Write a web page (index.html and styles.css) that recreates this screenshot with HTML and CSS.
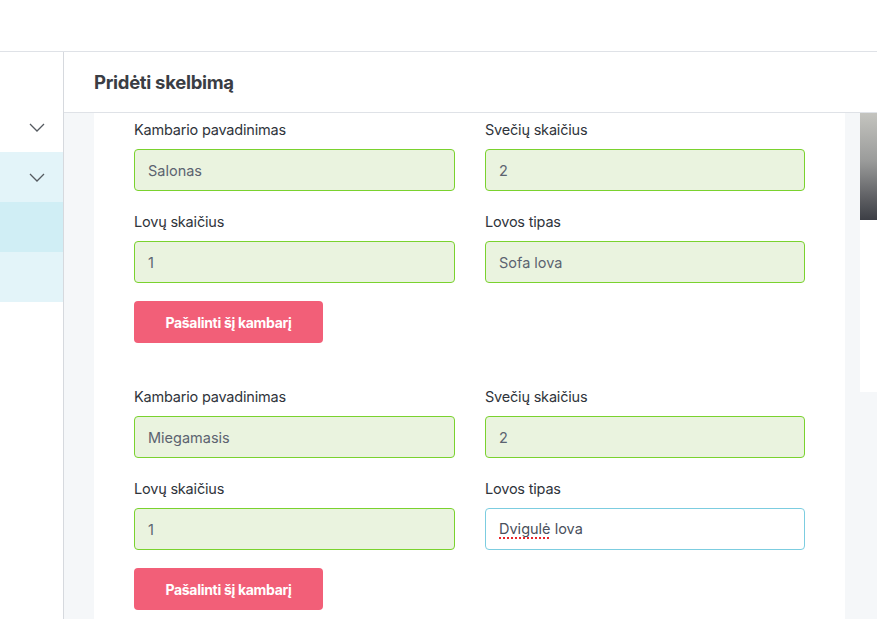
FILE: index.html
```html
<!DOCTYPE html>
<html lang="lt">

<head>
    <meta charset="UTF-8">
    <meta name="viewport" content="width=device-width, initial-scale=1.0">
    <title>Pridėti skelbimą</title>
    <link rel="stylesheet" href="styles.css">
</head>

<body>
    <div class="topbar"></div>

    <div class="layout">
        <aside class="sidebar">
            <div class="side-item"></div>
            <div class="side-item">
                <svg class="chevron" viewBox="0 0 16 9" width="16" height="9"><path d="M1 1l7 7 7-7" /></svg>
            </div>
            <div class="side-item open">
                <svg class="chevron" viewBox="0 0 16 9" width="16" height="9"><path d="M1 1l7 7 7-7" /></svg>
            </div>
            <div class="side-item active"></div>
            <div class="side-item open"></div>
        </aside>

        <main class="main">
            <div class="page-header">
                <h2>Pridėti skelbimą</h2>
            </div>

            <div class="page-body">
                <div class="panel">
                    <div class="room">
                        <div class="field-group">
                            <label>Kambario pavadinimas</label>
                            <input class="field valid" type="text" value="Salonas">
                        </div>
                        <div class="field-group">
                            <label>Svečių skaičius</label>
                            <input class="field valid" type="text" value="2">
                        </div>
                        <div class="field-group">
                            <label>Lovų skaičius</label>
                            <input class="field valid" type="text" value="1">
                        </div>
                        <div class="field-group">
                            <label>Lovos tipas</label>
                            <input class="field valid" type="text" value="Sofa lova">
                        </div>
                        <button class="btn-remove">Pašalinti šį kambarį</button>
                    </div>

                    <div class="room">
                        <div class="field-group">
                            <label>Kambario pavadinimas</label>
                            <input class="field valid" type="text" value="Miegamasis">
                        </div>
                        <div class="field-group">
                            <label>Svečių skaičius</label>
                            <input class="field valid" type="text" value="2">
                        </div>
                        <div class="field-group">
                            <label>Lovų skaičius</label>
                            <input class="field valid" type="text" value="1">
                        </div>
                        <div class="field-group">
                            <label>Lovos tipas</label>
                            <div class="field focused"><span class="misspelled">Dvigulė</span> lova</div>
                        </div>
                        <button class="btn-remove">Pašalinti šį kambarį</button>
                    </div>
                </div>

                <div class="preview">
                    <div class="preview-image"></div>
                </div>
            </div>
        </main>
    </div>
</body>

</html>
```

FILE: styles.css
```css
body {
    font-family: Inter, "Open Sans", Arial, sans-serif;
    margin: 0;
    padding: 0;
    background-color: #fff;
    color: #343a40;
    height: 619px;
    overflow: hidden;
}

.topbar {
    height: 51px;
    border-bottom: 1px solid #dfe2e7;
}

.layout {
    display: flex;
    height: 567px;
}

/* left navigation */
.sidebar {
    width: 63px;
    flex-shrink: 0;
    border-right: 1px solid #d6d9de;
}

.side-item {
    height: 50px;
    display: flex;
    align-items: center;
    justify-content: flex-end;
    padding-right: 18px;
}

.side-item.open {
    background-color: #e3f4f9;
}

.side-item.active {
    background-color: #d0eef5;
}

.chevron {
    fill: none;
    stroke: #555a60;
    stroke-width: 1.3;
}

.main {
    flex: 1;
    display: flex;
    flex-direction: column;
    min-width: 0;
}

.page-header {
    height: 60px;
    border-bottom: 1px solid #dfe2e7;
    display: flex;
    align-items: center;
    padding-left: 30px;
}

.page-header h2 {
    margin: 0;
    font-size: 18.5px;
    font-weight: 700;
    letter-spacing: -0.3px;
    color: #3a3d44;
}

.page-body {
    flex: 1;
    display: flex;
    gap: 15px;
    padding-left: 30px;
    background-color: #f5f7f9;
    overflow: hidden;
}

.panel {
    width: 671px;
    flex-shrink: 0;
    background-color: #fff;
    padding: 7px 40px 0;
}

.room {
    display: grid;
    grid-template-columns: 321px 320px;
    column-gap: 30px;
    row-gap: 21px;
    margin-bottom: 44px;
}

.field-group label {
    display: block;
    font-size: 14.5px;
    font-weight: 400;
    line-height: 20px;
    letter-spacing: -0.2px;
    margin-bottom: 9px;
    color: #2f343b;
}

.field {
    box-sizing: border-box;
    display: block;
    width: 100%;
    height: 42px;
    padding: 0 13px;
    font-family: inherit;
    font-size: 14.5px;
    color: #5c6370;
    border-radius: 4px;
    border: 1px solid #ced4da;
    background-color: #fff;
    outline: none;
}

.field.valid {
    background-color: #eaf3df;
    border-color: #7ad22e;
}

.field.focused {
    border-color: #7ccde0;
    line-height: 40px;
    color: #4a505c;
}

/* spell-check squiggle */
.misspelled {
    text-decoration-line: underline;
    text-decoration-style: dotted;
    text-decoration-color: #e8262b;
    text-decoration-thickness: 1.5px;
    text-underline-offset: 3px;
}

.btn-remove {
    grid-column: 1;
    justify-self: start;
    width: 189px;
    height: 42px;
    margin-top: -3px;
    border: none;
    border-radius: 4px;
    background-color: #f25f78;
    color: #fff;
    font-family: inherit;
    font-size: 14px;
    font-weight: 700;
    letter-spacing: -0.3px;
    cursor: pointer;
}

/* listing preview on the right */
.preview {
    flex: 1;
    align-self: flex-start;
    height: 279px;
    background-color: #fff;
}

.preview-image {
    height: 107px;
    background: linear-gradient(#c4c4bf, #9a9b9a 45%, #5d5e62 80%, #3c3e45);
}
```
